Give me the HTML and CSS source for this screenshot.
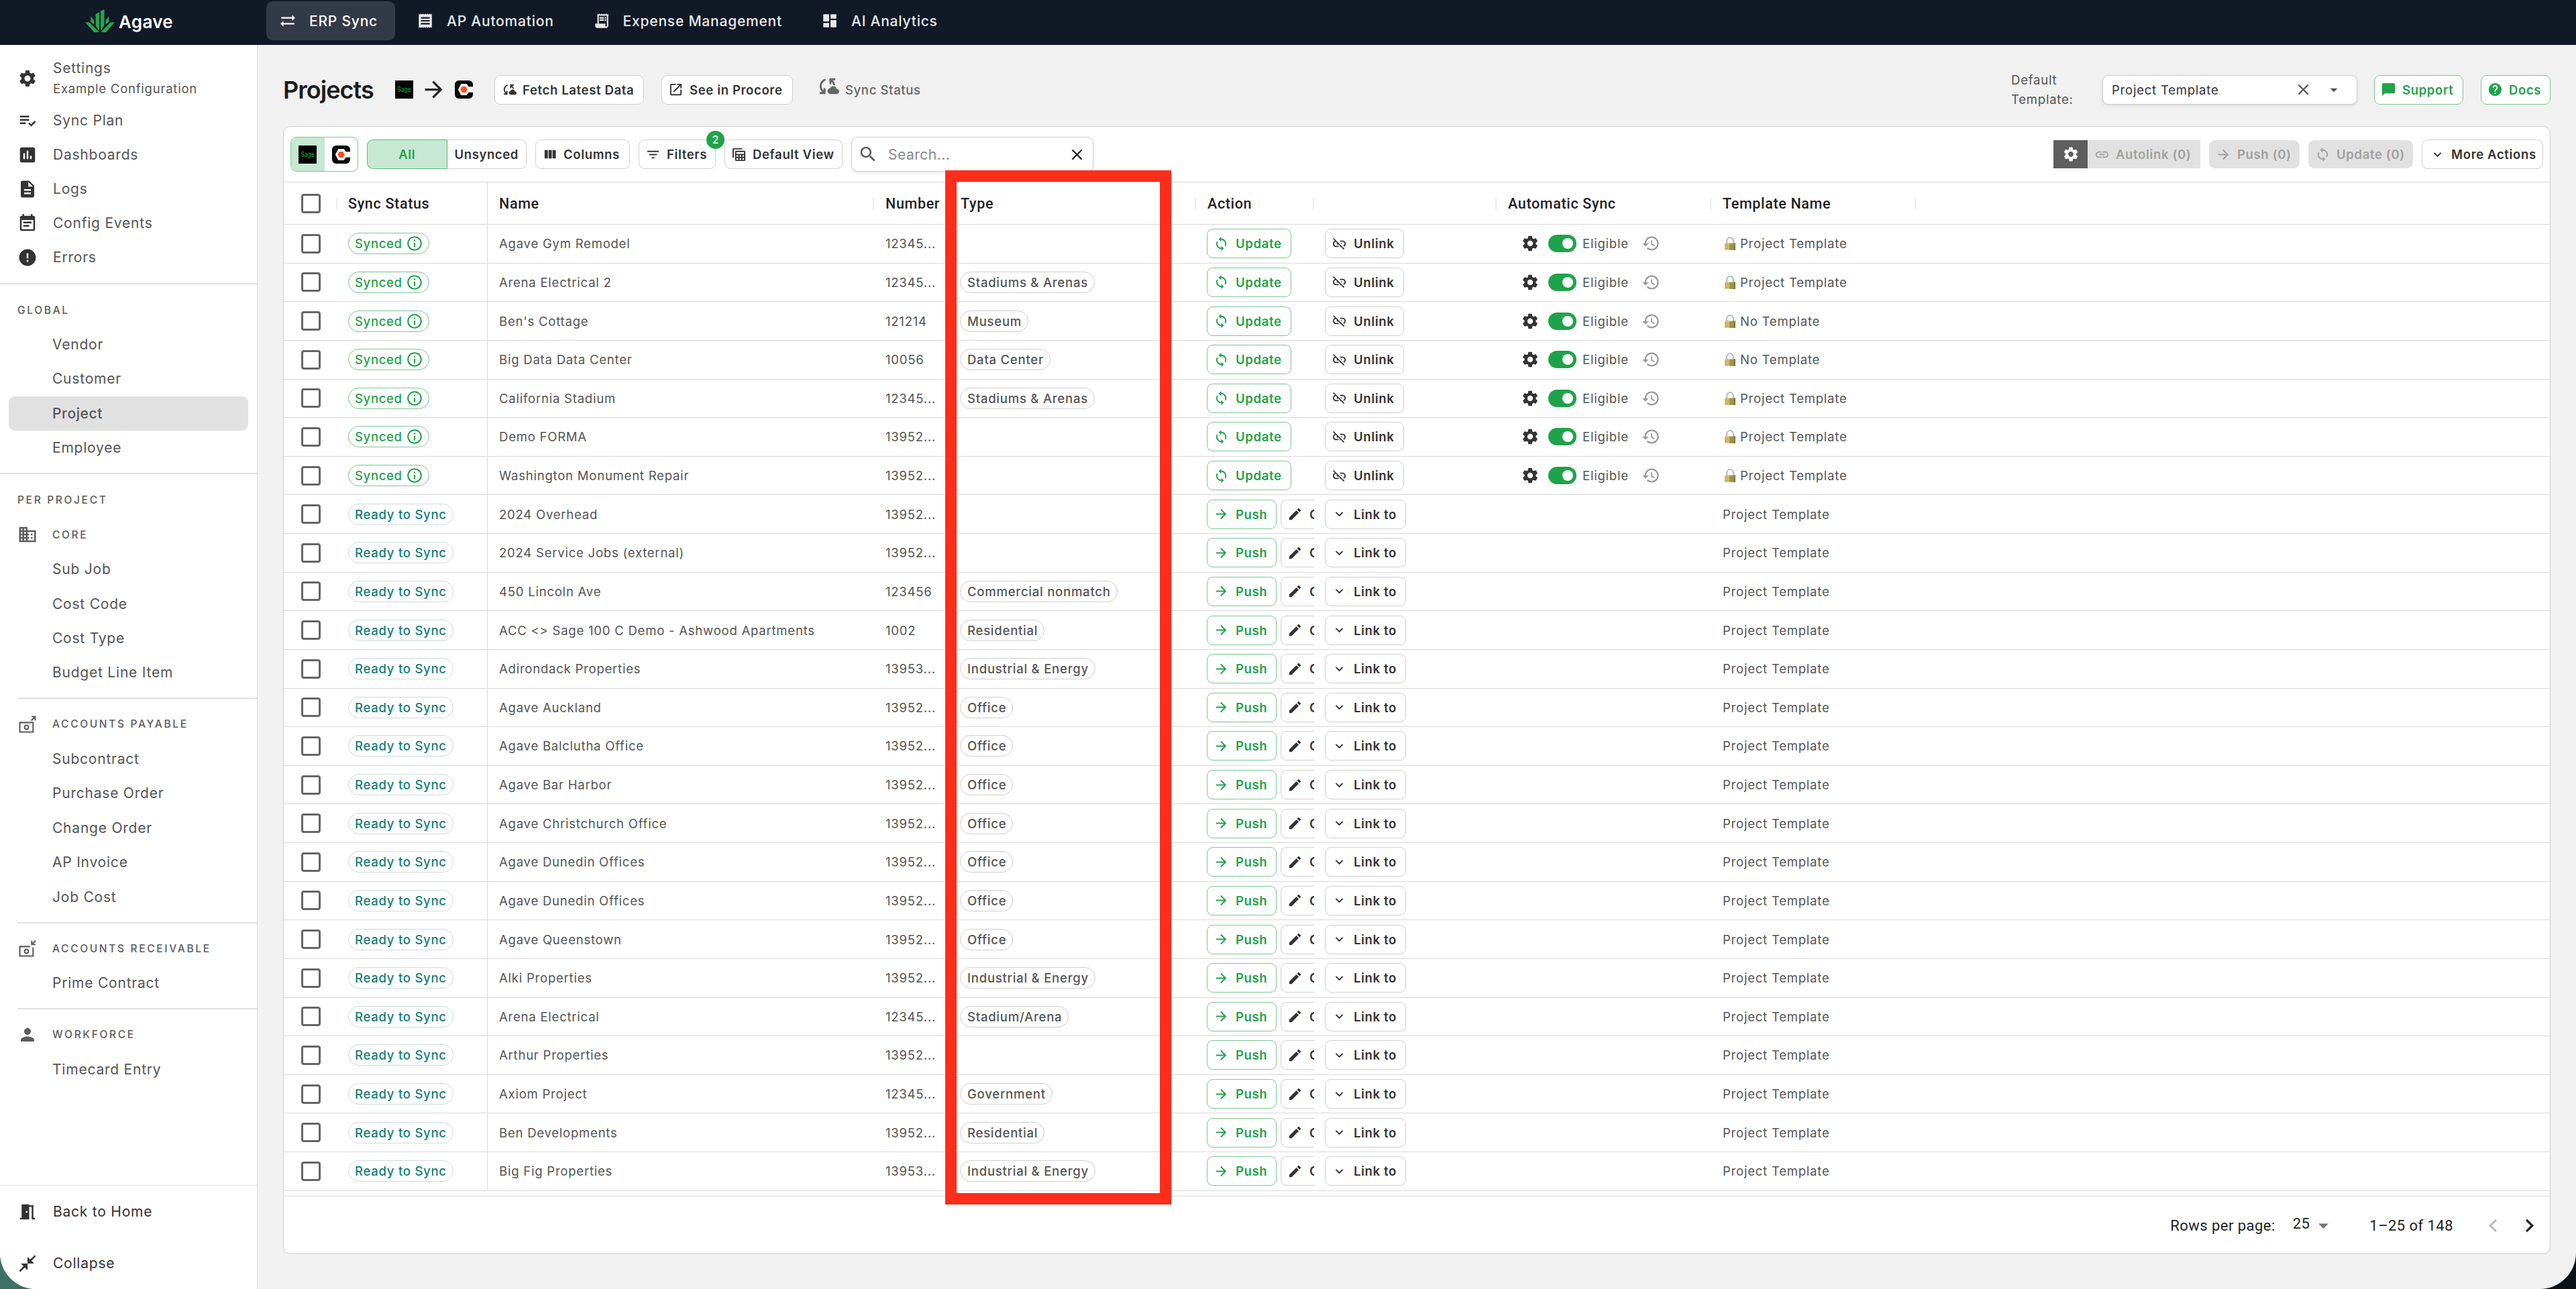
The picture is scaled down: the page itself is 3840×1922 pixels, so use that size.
FILE: index.html
```html
<!DOCTYPE html>
<html lang="en">
<head>
    <meta charset="UTF-8">
    <meta name="viewport" content="width=device-width, initial-scale=1.0">
    <title>Projects - Agave ERP Sync</title>
    <link rel="stylesheet" href="styles.css">
</head>
<body>
    <!-- icon sprite -->
    <svg class="sprite">
        <symbol id="i-swap" viewBox="0 0 24 24"><path d="m22 8-4-4v3H3v2h15v3zM2 16l4 4v-3h15v-2H6v-3z"/></symbol>
        <symbol id="i-receipt" viewBox="0 0 24 24"><path d="M18 17H6v-2h12zm0-4H6v-2h12zm0-4H6V7h12zM3 22l1.5-1.5L6 22l1.5-1.5L9 22l1.5-1.5L12 22l1.5-1.5L15 22l1.5-1.5L18 22l1.5-1.5L21 22V2l-1.5 1.5L18 2l-1.5 1.5L15 2l-1.5 1.5L12 2l-1.5 1.5L9 2 7.5 3.5 6 2 4.5 3.5 3 2z"/></symbol>
        <symbol id="i-long" viewBox="0 0 24 24"><path d="M19.5 3.5 18 2l-1.5 1.5L15 2l-1.5 1.5L12 2l-1.5 1.5L9 2 7.5 3.5 6 2v14H3v3c0 1.66 1.34 3 3 3h12c1.66 0 3-1.34 3-3V2zM19 19c0 .55-.45 1-1 1s-1-.45-1-1v-3H8V5h11zM9 7h6v2H9zM16 7h2v2h-2zM9 10h6v2H9zM16 10h2v2h-2z"/></symbol>
        <symbol id="i-dash" viewBox="0 0 24 24"><path d="M3 13h8V3H3zm0 8h8v-6H3zm10 0h8V11h-8zm0-18v6h8V3z"/></symbol>
        <symbol id="i-gear" viewBox="0 0 24 24"><path d="M19.14 12.94c.04-.3.06-.61.06-.94 0-.32-.02-.64-.07-.94l2.03-1.58c.18-.14.23-.41.12-.61l-1.92-3.32c-.12-.22-.37-.29-.59-.22l-2.39.96c-.5-.38-1.03-.7-1.62-.94l-.36-2.54c-.04-.24-.24-.41-.48-.41h-3.84c-.24 0-.43.17-.47.41l-.36 2.54c-.59.24-1.13.57-1.62.94l-2.39-.96c-.22-.08-.47 0-.59.22L2.74 8.87c-.12.21-.08.47.12.61l2.03 1.58c-.05.3-.09.63-.09.94s.02.64.07.94l-2.03 1.58c-.18.14-.23.41-.12.61l1.92 3.32c.12.22.37.29.59.22l2.39-.96c.5.38 1.03.7 1.62.94l.36 2.54c.05.24.24.41.48.41h3.84c.24 0 .44-.17.47-.41l.36-2.54c.59-.24 1.13-.56 1.62-.94l2.39.96c.22.08.47 0 .59-.22l1.92-3.32c.12-.22.07-.47-.12-.61zM12 15.6c-1.98 0-3.6-1.62-3.6-3.6s1.62-3.6 3.6-3.6 3.6 1.62 3.6 3.6-1.62 3.6-3.6 3.6"/></symbol>
        <symbol id="i-plan" viewBox="0 0 24 24"><path d="M3 10h11v2H3zm0-4h11v2H3zm0 8h7v2H3zm17.59-2.07-4.25 4.24-2.12-2.12-1.41 1.41L16.34 19 22 13.34z"/></symbol>
        <symbol id="i-chart" viewBox="0 0 24 24"><path d="M19 3H5c-1.1 0-2 .9-2 2v14c0 1.1.9 2 2 2h14c1.1 0 2-.9 2-2V5c0-1.1-.9-2-2-2M9 17H7v-7h2zm4 0h-2V7h2zm4 0h-2v-4h2z"/></symbol>
        <symbol id="i-doc" viewBox="0 0 24 24"><path d="M14 2H6c-1.1 0-1.99.9-1.99 2L4 20c0 1.1.89 2 1.99 2H18c1.1 0 2-.9 2-2V8zm2 16H8v-2h8zm0-4H8v-2h8zm-3-5V3.5L18.5 9z"/></symbol>
        <symbol id="i-event" viewBox="0 0 24 24"><path d="M17 10H7v2h10zm2-7h-1V1h-2v2H8V1H6v2H5c-1.11 0-1.99.9-1.99 2L3 19c0 1.1.89 2 2 2h14c1.1 0 2-.9 2-2V5c0-1.1-.9-2-2-2m0 16H5V8h14zm-5-5H7v2h7z"/></symbol>
        <symbol id="i-error" viewBox="0 0 24 24"><path d="M12 2C6.48 2 2 6.48 2 12s4.48 10 10 10 10-4.48 10-10S17.52 2 12 2m1 15h-2v-2h2zm0-4h-2V7h2z"/></symbol>
        <symbol id="i-building" viewBox="0 0 24 24"><path d="M12 7V3H2v18h20V7zM6 19H4v-2h2zm0-4H4v-2h2zm0-4H4V9h2zm0-4H4V5h2zm4 12H8v-2h2zm0-4H8v-2h2zm0-4H8V9h2zm0-4H8V5h2zm10 12h-8v-2h2v-2h-2v-2h2v-2h-2V9h8zm-2-8h-2v2h2zm0 4h-2v2h2z"/></symbol>
        <symbol id="i-payable" viewBox="0 0 24 24"><path d="M2 9h17.5v13H2zm1.7 1.7v9.6h14.1v-9.6z" fill-rule="evenodd"/><circle cx="10.8" cy="15.5" r="2.3" fill="none" stroke="currentColor" stroke-width="1.6"/><path d="M16.8 2H22v5.4h-1.6V4.9l-3.2 3.2-1.3-1.2 3.3-3.3h-2.4z"/></symbol>
        <symbol id="i-receivable" viewBox="0 0 24 24"><path d="M2 9h13v1.7H3.7v9.6h14.1V11h1.7v11H2z"/><circle cx="10.8" cy="15.5" r="2.3" fill="none" stroke="currentColor" stroke-width="1.6"/><path d="M21.5 8.2h-5.3V2.8h1.6v2.5L21 2.1l1.2 1.2L19 6.6h2.5z"/></symbol>
        <symbol id="i-person" viewBox="0 0 24 24"><path d="M12 12c2.21 0 4-1.79 4-4s-1.79-4-4-4-4 1.79-4 4 1.79 4 4 4m0 2c-2.67 0-8 1.34-8 4v2h16v-2c0-2.66-5.33-4-8-4"/></symbol>
        <symbol id="i-door" viewBox="0 0 24 24"><path d="M14 6v15H3v-2h2V3h9v1h5v15h2v2h-4V6zm-4 5v2h2v-2z"/></symbol>
        <symbol id="i-collapse" viewBox="0 0 24 24"><path d="M22 3.41 16.71 8.7 20 12h-8V4l3.29 3.29L20.59 2zM3.41 22l5.29-5.29L12 20v-8H4l3.29 3.29L2 20.59z"/></symbol>
        <symbol id="i-forward" viewBox="0 0 24 24"><path d="m12 4-1.41 1.41L16.17 11H4v2h12.17l-5.58 5.59L12 20l8-8z"/></symbol>
        <symbol id="i-cloud" viewBox="0 0 24 24"><path d="M21.5 14.98c-.02 0-.03 0-.05.01C21.2 13.3 19.76 12 18 12c-1.4 0-2.6.83-3.16 2.02C13.26 14.1 12 15.4 12 17c0 1.66 1.34 3 3 3l6.5-.02c1.38 0 2.5-1.12 2.5-2.5s-1.12-2.5-2.5-2.5M10 4.26v2.09C7.67 7.18 6 9.39 6 12c0 1.77.78 3.34 2 4.44V14h2v6H4v-2h2.73C5.06 16.54 4 14.4 4 12c0-3.73 2.55-6.85 6-7.74M20 6h-2.73c1.43 1.26 2.41 3.01 2.66 5h-2.02c-.23-1.36-.93-2.55-1.91-3.44V10h-2V4h6z"/></symbol>
        <symbol id="i-open" viewBox="0 0 24 24"><path d="M19 19H5V5h7V3H5c-1.11 0-2 .9-2 2v14c0 1.1.89 2 2 2h14c1.1 0 2-.9 2-2v-7h-2zM14 3v2h3.59l-9.83 9.83 1.41 1.41L19 6.41V10h2V3z"/></symbol>
        <symbol id="i-columns" viewBox="0 0 24 24"><path d="M10.2 18h5V5h-5zm-6.2 0h5V5H4zM16.4 5v13h5V5z"/></symbol>
        <symbol id="i-filter" viewBox="0 0 24 24"><path d="M10 18h4v-2h-4zM3 6v2h18V6zm3 7h12v-2H6z"/></symbol>
        <symbol id="i-views" viewBox="0 0 24 24"><path d="M17 2H4C2.9 2 2 2.9 2 4v13h2V4h13z"/><path d="M20 6H8c-1.1 0-2 .9-2 2v12c0 1.1.9 2 2 2h12c1.1 0 2-.9 2-2V8c0-1.1-.9-2-2-2M8 8h12v3H8zm0 5h3v2.5H8zm5 0h2.5v2.5H13zm4.5 0H20v2.5h-2.5zM8 17.5h3V20H8zm5 0h2.5V20H13zm4.5 0H20V20h-2.5z" fill-rule="evenodd"/></symbol>
        <symbol id="i-search" viewBox="0 0 24 24"><path d="M15.5 14h-.79l-.28-.27C15.41 12.59 16 11.11 16 9.5 16 5.91 13.09 3 9.5 3S3 5.91 3 9.5 5.91 16 9.5 16c1.61 0 3.09-.59 4.23-1.57l.27.28v.79l5 4.99L20.49 19zm-6 0C7.01 14 5 11.99 5 9.5S7.01 5 9.5 5 14 7.01 14 9.5 11.99 14 9.5 14"/></symbol>
        <symbol id="i-close" viewBox="0 0 24 24"><path d="M19 6.41 17.59 5 12 10.59 6.41 5 5 6.41 10.59 12 5 17.59 6.41 19 12 13.41 17.59 19 19 17.59 13.41 12z"/></symbol>
        <symbol id="i-drop" viewBox="0 0 24 24"><path d="m7 10 5 5 5-5z"/></symbol>
        <symbol id="i-chat" viewBox="0 0 24 24"><path d="M20 2H4c-1.1 0-2 .9-2 2v18l4-4h14c1.1 0 2-.9 2-2V4c0-1.1-.9-2-2-2"/></symbol>
        <symbol id="i-help" viewBox="0 0 24 24"><path d="M12 2C6.48 2 2 6.48 2 12s4.48 10 10 10 10-4.48 10-10S17.52 2 12 2m1 17h-2v-2h2zm2.07-7.75-.9.92C13.45 12.9 13 13.5 13 15h-2v-.5c0-1.1.45-2.1 1.17-2.83l1.24-1.26c.37-.36.59-.86.59-1.41 0-1.1-.9-2-2-2s-2 .9-2 2H8c0-2.21 1.79-4 4-4s4 1.79 4 4c0 .88-.36 1.68-.93 2.25"/></symbol>
        <symbol id="i-link" viewBox="0 0 24 24"><path d="M3.9 12c0-1.71 1.39-3.1 3.1-3.1h4V7H7c-2.76 0-5 2.24-5 5s2.24 5 5 5h4v-1.9H7c-1.71 0-3.1-1.39-3.1-3.1M8 13h8v-2H8zm9-6h-4v1.9h4c1.71 0 3.1 1.39 3.1 3.1s-1.39 3.1-3.1 3.1h-4V17h4c2.76 0 5-2.24 5-5s-2.24-5-5-5"/></symbol>
        <symbol id="i-unlink" viewBox="0 0 24 24"><path d="M17 7h-4v1.9h4c1.71 0 3.1 1.39 3.1 3.1 0 1.43-.98 2.63-2.31 2.98l1.46 1.46C20.88 15.61 22 13.95 22 12c0-2.76-2.24-5-5-5m-1 4h-2.19l2 2H16zM2 4.27l3.11 3.11C3.29 8.12 2 9.91 2 12c0 2.76 2.24 5 5 5h4v-1.9H7c-1.71 0-3.1-1.39-3.1-3.1 0-1.59 1.21-2.9 2.76-3.07L8.73 11H8v2h2.73L13 15.27V17h1.73l4.01 4L20 19.74 3.27 3z"/></symbol>
        <symbol id="i-sync" viewBox="0 0 24 24"><path d="M12 4V1L8 5l4 4V6c3.31 0 6 2.69 6 6 0 1.01-.25 1.97-.7 2.8l1.46 1.46C19.54 15.03 20 13.57 20 12c0-4.42-3.58-8-8-8m0 14c-3.31 0-6-2.69-6-6 0-1.01.25-1.97.7-2.8L5.24 7.74C4.46 8.97 4 10.43 4 12c0 4.42 3.58 8 8 8v3l4-4-4-4z"/></symbol>
        <symbol id="i-edit" viewBox="0 0 24 24"><path d="M3 17.25V21h3.75L17.81 9.94l-3.75-3.75zM20.71 7.04c.39-.39.39-1.02 0-1.41l-2.34-2.34c-.39-.39-1.02-.39-1.41 0l-1.83 1.83 3.75 3.75z"/></symbol>
        <symbol id="i-expand" viewBox="0 0 24 24"><path d="M16.59 8.59 12 13.17 7.41 8.59 6 10l6 6 6-6z"/></symbol>
        <symbol id="i-history" viewBox="0 0 24 24"><path d="M13 3c-4.97 0-9 4.03-9 9H1l3.89 3.89.07.14L9 12H6c0-3.87 3.13-7 7-7s7 3.13 7 7-3.13 7-7 7c-1.93 0-3.68-.79-4.94-2.06l-1.42 1.42C8.27 19.99 10.51 21 13 21c4.97 0 9-4.03 9-9s-4.03-9-9-9m-1 5v5l4.28 2.54.72-1.21-3.5-2.08V8z"/></symbol>
        <symbol id="i-info" viewBox="0 0 24 24"><path d="M11 7h2v2h-2zm0 4h2v6h-2zm1-9C6.48 2 2 6.48 2 12s4.48 10 10 10 10-4.48 10-10S17.52 2 12 2m0 18c-4.41 0-8-3.59-8-8s3.59-8 8-8 8 3.59 8 8-3.59 8-8 8"/></symbol>
        <symbol id="i-left" viewBox="0 0 24 24"><path d="M15.41 7.41 14 6l-6 6 6 6 1.41-1.41L10.83 12z"/></symbol>
        <symbol id="i-right" viewBox="0 0 24 24"><path d="M10 6 8.59 7.41 13.17 12l-4.58 4.59L10 18l6-6z"/></symbol>
        <symbol id="i-sage" viewBox="0 0 27 27"><path fill="#000" d="M0 0h27v27H0z"/><text x="13.5" y="17" text-anchor="middle" textLength="20" lengthAdjust="spacingAndGlyphs" font-family="Inter, sans-serif" font-size="10.5" letter-spacing="0" fill="#1fb53c">Sage</text></symbol>
        <symbol id="i-procore" viewBox="0 0 27 27"><path fill="#000" d="M6 0h15a6 6 0 0 1 6 6v3.5h-6.500L17.500 5h-8L5 13.500 9.500 22h8l3-4.500H27V21a6 6 0 0 1-6 6H6a6 6 0 0 1-6-6V6a6 6 0 0 1 6-6z"/><path fill="#fff" d="M9.5 5h8l3 4.500H27v8h-6.500l-3 4.500h-8L5 13.500z"/><path fill="#ff5020" d="M10.8 9h5.400l2.600 4.500-2.600 4.500h-5.400l-2.600-4.500z"/></symbol>
        <symbol id="i-lock" viewBox="0 0 16 20"><path d="M3.2 10V6a4.800 4.800 0 0 1 9.600 0v4" fill="none" stroke="#9fb3c6" stroke-width="1.700"/><path fill="#a79a52" d="M0 9.500h16V20H0z"/><path fill="#d2ca78" d="M0 9.500h7V20H0z"/><path fill="#8b7f3f" d="M13 9.500h3V20h-3z"/><path stroke="#8b7f3f" stroke-width=".5" d="M0 12.500h16M0 15h16M0 17.500h16"/></symbol>
    </svg>

    <div class="window">
        <header class="topbar">
            <div class="brand">
                <svg class="brand-mark" viewBox="0 0 44 34"><path fill="#2ba24c" d="M15.6 7 21.2 4v28.5l-5.6-8zM23 2.5 28.5 0v24L23 32.5zM8.3 10l5 6.500v6l-5-4zM35.4 10l-5 6.500v6l5-4zM0 19.3h6L21.2 34h-8zM44 19.3h-6L23 34h8z"/></svg>
                <span class="brand-name">Agave</span>
            </div>
            <nav class="tabs">
                <a class="tab active"><svg class="icon"><use href="#i-swap"/></svg>ERP Sync</a>
                <a class="tab"><svg class="icon"><use href="#i-receipt"/></svg>AP Automation</a>
                <a class="tab"><svg class="icon"><use href="#i-long"/></svg>Expense Management</a>
                <a class="tab"><svg class="icon"><use href="#i-dash"/></svg>AI Analytics</a>
            </nav>
        </header>

        <div class="layout">
            <aside class="sidebar">
                <div class="side-block side-first">
                    <a class="side-item settings"><svg class="icon"><use href="#i-gear"/></svg><span>Settings<small>Example Configuration</small></span></a>
                    <a class="side-item"><svg class="icon"><use href="#i-plan"/></svg>Sync Plan</a>
                    <a class="side-item"><svg class="icon"><use href="#i-chart"/></svg>Dashboards</a>
                    <a class="side-item"><svg class="icon"><use href="#i-doc"/></svg>Logs</a>
                    <a class="side-item"><svg class="icon"><use href="#i-event"/></svg>Config Events</a>
                    <a class="side-item"><svg class="icon"><use href="#i-error"/></svg>Errors</a>
                </div>
                <div class="side-block">
                    <h3 class="side-head">Global</h3>
                    <a class="side-link">Vendor</a>
                    <a class="side-link">Customer</a>
                    <a class="side-link selected">Project</a>
                    <a class="side-link">Employee</a>
                </div>
                <div class="side-block">
                    <h3 class="side-head">Per Project</h3>
                    <h4 class="side-group core"><svg class="icon"><use href="#i-building"/></svg>Core</h4>
                    <a class="side-link">Sub Job</a>
                    <a class="side-link">Cost Code</a>
                    <a class="side-link">Cost Type</a>
                    <a class="side-link">Budget Line Item</a>
                </div>
                <div class="side-block inset">
                    <h4 class="side-group"><svg class="icon"><use href="#i-payable"/></svg>Accounts Payable</h4>
                    <a class="side-link">Subcontract</a>
                    <a class="side-link">Purchase Order</a>
                    <a class="side-link">Change Order</a>
                    <a class="side-link">AP Invoice</a>
                    <a class="side-link">Job Cost</a>
                </div>
                <div class="side-block inset">
                    <h4 class="side-group"><svg class="icon"><use href="#i-receivable"/></svg>Accounts Receivable</h4>
                    <a class="side-link">Prime Contract</a>
                </div>
                <div class="side-block inset">
                    <h4 class="side-group"><svg class="icon"><use href="#i-person"/></svg>Workforce</h4>
                    <a class="side-link">Timecard Entry</a>
                </div>
                <div class="side-bottom">
                    <a class="side-item"><svg class="icon"><use href="#i-door"/></svg>Back to Home</a>
                    <a class="side-item"><svg class="icon"><use href="#i-collapse"/></svg>Collapse</a>
                </div>
            </aside>

            <main class="main">
                <div class="page-head">
                    <h1 class="page-title">Projects</h1>
                    <svg class="app-logo"><use href="#i-sage"/></svg>
                    <svg class="to-arrow"><use href="#i-forward"/></svg>
                    <svg class="app-logo"><use href="#i-procore"/></svg>
                    <button class="btn fetch"><svg class="icon"><use href="#i-cloud"/></svg>Fetch Latest Data</button>
                    <button class="btn procore"><svg class="icon"><use href="#i-open"/></svg>See in Procore</button>
                    <span class="sync-status"><svg class="icon"><use href="#i-cloud"/></svg>Sync Status</span>
                    <span class="tpl-label">Default<br>Template:</span>
                    <div class="tpl-select">
                        <span>Project Template</span>
                        <svg class="icon clear"><use href="#i-close"/></svg>
                        <svg class="icon caret"><use href="#i-drop"/></svg>
                    </div>
                    <button class="btn green support"><svg class="icon"><use href="#i-chat"/></svg>Support</button>
                    <button class="btn green docs"><svg class="icon"><use href="#i-help"/></svg>Docs</button>
                </div>

                <section class="card">
                    <div class="toolbar">
                        <div class="app-toggle">
                            <span class="on"><svg class="app-logo"><use href="#i-sage"/></svg></span>
                            <span><svg class="app-logo"><use href="#i-procore"/></svg></span>
                        </div>
                        <div class="seg">
                            <span class="on">All</span>
                            <span>Unsynced</span>
                        </div>
                        <button class="btn columns"><svg class="icon"><use href="#i-columns"/></svg>Columns</button>
                        <button class="btn filters"><svg class="icon"><use href="#i-filter"/></svg>Filters<span class="badge">2</span></button>
                        <button class="btn view"><svg class="icon"><use href="#i-views"/></svg>Default View</button>
                        <div class="search">
                            <svg class="icon"><use href="#i-search"/></svg>
                            <span>Search...</span>
                            <svg class="icon clear"><use href="#i-close"/></svg>
                        </div>
                        <div class="autolink">
                            <span class="autolink-gear"><svg class="icon"><use href="#i-gear"/></svg></span>
                            <button class="btn off flat"><svg class="icon"><use href="#i-link"/></svg>Autolink (0)</button>
                        </div>
                        <button class="btn off push-all"><svg class="icon"><use href="#i-forward"/></svg>Push (0)</button>
                        <button class="btn off update-all"><svg class="icon"><use href="#i-sync"/></svg>Update (0)</button>
                        <button class="btn more"><svg class="icon"><use href="#i-expand"/></svg>More Actions</button>
                    </div>

                    <div class="table">
                        <div class="row head">
                            <div class="cell"><span class="box"></span></div>
                            <div class="cell status">Sync Status</div>
                            <div class="cell">Name</div>
                            <div class="cell">Number</div>
                            <div class="cell">Type</div>
                            <div class="cell">Action</div>
                            <div class="cell"></div>
                            <div class="cell">Automatic Sync</div>
                            <div class="cell">Template Name</div>
                        </div>
                        <div id="rows"></div>
                        <div class="highlight"></div>
                    </div>

                    <div class="pager">
                        <span class="per-page">Rows per page:</span>
                        <span class="per-value">25</span>
                        <svg class="icon caret"><use href="#i-drop"/></svg>
                        <span class="range">1–25 of 148</span>
                        <svg class="icon prev"><use href="#i-left"/></svg>
                        <svg class="icon next"><use href="#i-right"/></svg>
                    </div>
                </section>
            </main>
        </div>
    </div>
    <script src="script.js"></script>
</body>
</html>
```
FILE: styles.css
```css
* {
    box-sizing: border-box;
}
body {
    margin: 0;
    background: linear-gradient(to right, #3c7265 50%, #0b1114 50%);
    font-family: Inter, sans-serif;
    font-size: 18.5px;
    letter-spacing: 0.78px;
    color: #555;
}
.sprite {
    display: none;
}
.icon {
    width: 23px;
    height: 23px;
    fill: currentColor;
    flex: none;
}
.window {
    display: flex;
    flex-direction: column;
    height: 1922px;
    overflow: hidden;
    border-radius: 0 0 54px 54px;
    background: #f1f1f1;
}

/* top bar */
.topbar {
    display: flex;
    height: 67px;
    background: #121926;
}
.brand {
    display: flex;
    align-items: center;
    width: 397px;
    padding: 0 0 5px 127px;
}
.brand-mark {
    width: 44px;
    height: 34px;
    margin-right: 6px;
}
.brand-name {
    font-size: 26px;
    font-weight: 600;
    letter-spacing: 0.3px;
    color: #fff;
    padding-top: 3px;
}
.tabs {
    display: flex;
    gap: 13px;
    padding-top: 2px;
}
.tab {
    display: flex;
    align-items: center;
    height: 58px;
    padding: 0 26px 0 19px;
    border-radius: 9px;
    font-size: 21px;
    font-weight: 500;
    color: #e7e9ec;
}
.tab .icon {
    width: 26px;
    height: 26px;
    margin-right: 19px;
}
.tab.active {
    width: 192px;
    padding-right: 0;
    background: #333a47;
    color: #fff;
}

/* sidebar */
.layout {
    display: flex;
    flex: 1;
    min-height: 0;
}
.sidebar {
    display: flex;
    flex-direction: column;
    width: 384px;
    background: #fff;
    border-right: 1px solid #dcdcdc;
    font-size: 21px;
}
.side-first {
    padding-top: 12px;
}
.side-block {
    padding-bottom: 12px;
    border-bottom: 2px solid #e0e0e0;
}
.side-first.side-block {
    padding-bottom: 13px;
}
.side-block:nth-child(3),
.side-block:nth-child(4),
.side-block:nth-child(5) {
    border-bottom: none;
}
.side-block.inset .side-group {
    margin-left: 26px;
    padding-left: 0;
    border-top: 2px solid #e0e0e0;
    height: 65px;
}
.side-block.inset:nth-child(6) {
    border-bottom: none;
}
.side-item {
    display: flex;
    align-items: center;
    gap: 23px;
    height: 51px;
    padding-left: 26px;
}
.side-item.settings {
    height: 75px;
    line-height: 31px;
}
.side-item small {
    display: block;
    font-size: 18.5px;
}
.side-item .icon,
.side-group .icon {
    width: 30px;
    height: 30px;
}
.side-item .icon {
    color: #333;
}
.side-head,
.side-group {
    display: flex;
    align-items: center;
    height: 64px;
    margin: 0;
    padding: 12px 0 0 26px;
    font-size: 15.5px;
    font-weight: 500;
    letter-spacing: 2.67px;
    text-transform: uppercase;
    color: #5c5c5c;
}
.side-group {
    font-weight: 450;
    gap: 22px;
}
.side-group.core {
    height: 52px;
    padding-top: 0;
}
.side-link {
    display: flex;
    align-items: center;
    height: 51.3px;
    margin: 0 13px;
    padding-left: 65px;
    border-radius: 9px;
}
.side-link.selected {
    background: #e1e1e1;
    font-weight: 500;
    letter-spacing: 0.6px;
}
.side-block.inset .side-link {
    height: 51.5px;
}
.side-bottom {
    margin-top: auto;
    border-top: 1px solid #dcdcdc;
    color: #333;
}
.side-bottom .side-item {
    height: 77px;
}

/* buttons */
.btn {
    display: flex;
    align-items: center;
    gap: 9px;
    flex: none;
    height: 44px;
    padding: 0 0 0 9px;
    border: 1px solid #cfcfcf;
    border-radius: 9px;
    background: #fff;
    font: 600 18.5px Inter, sans-serif;
    letter-spacing: 0.65px;
    white-space: nowrap;
    color: #333;
}
.btn.green {
    border-color: #7cc894;
    color: #1fa34a;
}
.btn.off {
    height: 42px;
    border: none;
    padding-left: 10px;
    background: #e1e1e1;
    color: #a0a0a0;
}
.btn.flat {
    border-radius: 0;
}

/* page heading */
.main {
    flex: 1;
    padding: 0 38px;
}
.page-head {
    display: flex;
    align-items: center;
    height: 121px;
    padding-top: 12px;
}
.page-title {
    width: 167px;
    margin: 0;
    font-size: 36px;
    font-weight: 600;
    letter-spacing: -0.96px;
    color: #1c1c1c;
}
.app-logo {
    width: 27px;
    height: 27px;
    flex: none;
}
.to-arrow {
    width: 39px;
    height: 39px;
    margin: 0 12px 0 11px;
    fill: #222;
}
.fetch {
    width: 223px;
    margin-left: 32px;
}
.procore {
    width: 196px;
    margin-left: 26px;
}
.sync-status {
    display: flex;
    align-items: center;
    gap: 9px;
    margin-left: 34px;
    font-weight: 500;
    letter-spacing: 0.64px;
    color: #666;
}
.sync-status .icon {
    width: 35px;
    height: 35px;
    margin-top: -10px;
}
.tpl-label {
    width: 136px;
    margin-left: auto;
    line-height: 29px;
}
.tpl-select {
    display: flex;
    align-items: center;
    width: 380px;
    height: 44px;
    margin-right: 25px;
    padding-left: 13px;
    border: 1px solid #cfcfcf;
    border-radius: 9px;
    background: #fff;
    box-shadow: 0 2px 4px rgba(0, 0, 0, 0.1);
    color: #333;
}
.tpl-select .icon {
    color: #555;
}
.tpl-select .clear {
    width: 27px;
    height: 27px;
    margin-left: auto;
    margin-right: 19px;
}
.tpl-select .caret {
    width: 26px;
    height: 26px;
    margin-right: 21px;
}
.support {
    width: 133px;
    margin-right: 26px;
}
.docs {
    width: 104px;
}

/* card and toolbar */
.card {
    display: flex;
    flex-direction: column;
    height: 1682px;
    border: 1px solid #cfcfcf;
    border-radius: 11px;
    background: #fff;
}
.toolbar {
    display: flex;
    align-items: center;
    gap: 13px;
    height: 83px;
    padding: 0 10px;
    border-bottom: 1px solid #d9d9d9;
}
.app-toggle {
    display: flex;
    width: 101px;
    height: 52px;
    border: 1px solid #7cc894;
    border-radius: 9px;
    overflow: hidden;
}
.app-toggle span {
    display: flex;
    align-items: center;
    justify-content: center;
    flex: 1;
}
.app-toggle .on,
.seg .on {
    background: #c7e8d2;
}
.seg {
    display: flex;
    width: 238px;
    height: 44px;
    font-weight: 600;
    letter-spacing: 0.6px;
    color: #333;
}
.seg span {
    display: flex;
    align-items: center;
    justify-content: center;
    flex: 1;
    border: 1px solid #cfcfcf;
    border-left: none;
    border-radius: 0 9px 9px 0;
}
.seg .on {
    border: 1px solid #5dbb7b;
    border-radius: 9px 0 0 9px;
    color: #1fa34a;
}
.columns {
    width: 141px;
}
.filters {
    position: relative;
    width: 115px;
}
.badge {
    position: absolute;
    top: -14px;
    right: -14px;
    width: 27px;
    height: 27px;
    border-radius: 50%;
    background: #1fa34a;
    color: #fff;
    font-size: 16px;
    font-weight: 500;
    line-height: 27px;
    letter-spacing: 0;
    text-align: center;
}
.view {
    width: 176px;
}
.search {
    display: flex;
    align-items: center;
    width: 361px;
    height: 52px;
    padding: 0 10px 0 9px;
    border: 1px solid #cfcfcf;
    border-radius: 9px;
    box-shadow: 0 2px 4px rgba(0, 0, 0, 0.1);
    font-size: 21px;
    letter-spacing: 0.5px;
    color: #888;
}
.search .icon {
    width: 30px;
    height: 30px;
    margin-right: 15px;
    color: #555;
}
.search .clear {
    width: 27px;
    height: 27px;
    margin: 0 0 0 auto;
    color: #222;
}
.autolink {
    display: flex;
    width: 219px;
    height: 42px;
    margin-left: auto;
}
.autolink-gear {
    display: flex;
    align-items: center;
    justify-content: center;
    width: 51px;
    background: #5e5e5e;
    color: #fff;
}
.autolink-gear .icon {
    width: 26px;
    height: 26px;
}
.autolink .btn {
    flex: 1;
}
.push-all {
    width: 135px;
}
.update-all {
    width: 156px;
}
.more {
    width: 181px;
    padding-left: 11px;
}

/* table */
.table {
    position: relative;
}
.row {
    display: grid;
    grid-template-columns: 80px 224px 576px 112px 368px 176px 272px 320px 305px;
    height: 57.64px;
    border-bottom: 1px solid #d9d9d9;
}
.cell {
    display: flex;
    align-items: center;
    min-width: 0;
    padding-left: 17px;
    white-space: nowrap;
}
.cell:first-child {
    padding-left: 26px;
}
.cell.status,
.cell.act {
    padding-left: 16px;
}
.row .status {
    border-right: 1px solid #dcdcdc;
}
.head {
    height: 63px;
    font: 500 21.5px Roboto, sans-serif;
    letter-spacing: 0.66px;
    color: #1f1f1f;
}
/* short resize handle at the right of each heading */
.head .cell::after {
    content: "";
    width: 2px;
    height: 17px;
    margin-left: auto;
    background: #ececec;
}
.head .status::after {
    display: none;
}
.box {
    width: 29px;
    height: 29px;
    border: 3px solid #666;
    border-radius: 4px;
}
.chip {
    display: inline-flex;
    align-items: center;
    height: 32px;
    margin-left: -1px;
    padding: 0 9px 0 10px;
    border: 1px solid #cfcfcf;
    border-radius: 16px;
    font-weight: 450;
    letter-spacing: 0.77px;
}
.status .chip {
    margin-left: 0;
}
.chip.synced {
    gap: 5px;
    padding: 0 8px 0 9px;
    border-color: #7cc894;
    font-weight: 500;
    letter-spacing: 0.65px;
    color: #1fa34a;
}
.chip.synced .icon {
    width: 26px;
    height: 26px;
}
.chip.ready {
    border-color: #cfdcda;
    font-weight: 500;
    letter-spacing: 0.75px;
    padding: 0 9px;
    color: #138077;
}
.act {
    gap: 6px;
    overflow: hidden;
}
.act .btn,
.unlink,
.link-to {
    gap: 10px;
}
.act .update {
    width: 126px;
}
.act .push {
    width: 104px;
}
.unlink,
.link-to {
    margin-left: -1px;
}
.unlink {
    width: 118px;
}
.link-to {
    width: 121px;
}
.auto .icon {
    width: 28px;
    height: 28px;
    color: #333;
}
.auto .icon:first-child {
    margin-left: 19px;
}
.auto .toggle {
    display: flex;
    justify-content: flex-end;
    align-items: center;
    width: 42px;
    height: 26px;
    margin: 0 9px 0 13px;
    padding-right: 5px;
    border-radius: 13px;
    background: #1fa34a;
}
.toggle::after {
    content: "";
    width: 16px;
    height: 16px;
    border-radius: 50%;
    background: #fff;
}
.auto .icon.history {
    margin-left: 19px;
    color: #999;
}
.lock {
    width: 16px;
    height: 20px;
    margin: 0 7px 0 3px;
}
.highlight {
    position: absolute;
    top: -18px;
    left: 986px;
    width: 337px;
    height: 1542px;
    border: 17px solid #fc2d1a;
}

/* footer */
.pager {
    display: flex;
    align-items: center;
    height: 86px;
    margin-top: auto;
    padding: 1px 11px 0 0;
    border-top: 1px solid #d9d9d9;
    font: 400 22px Roboto, sans-serif;
    letter-spacing: 0.45px;
    color: #222;
}
.per-page {
    margin-left: auto;
    margin-right: 26px;
}
.per-value {
    padding-bottom: 5px;
}
.pager .caret {
    width: 35px;
    height: 35px;
    margin: 0 51px 0 3px;
    color: #757575;
}
.pager .prev,
.pager .next {
    width: 39px;
    height: 39px;
}
.pager .prev {
    margin: 0 15px 0 40px;
    color: #bdbdbd;
}
```
FILE: script.js
```js
// [name, number, type, template] - first seven projects are already synced
const projects = [
    ['Agave Gym Remodel', '12345...', '', 'Project Template'],
    ['Arena Electrical 2', '12345...', 'Stadiums & Arenas', 'Project Template'],
    ["Ben's Cottage", '121214', 'Museum', 'No Template'],
    ['Big Data Data Center', '10056', 'Data Center', 'No Template'],
    ['California Stadium', '12345...', 'Stadiums & Arenas', 'Project Template'],
    ['Demo FORMA', '13952...', '', 'Project Template'],
    ['Washington Monument Repair', '13952...', '', 'Project Template'],
    ['2024 Overhead', '13952...', '', 'Project Template'],
    ['2024 Service Jobs (external)', '13952...', '', 'Project Template'],
    ['450 Lincoln Ave', '123456', 'Commercial nonmatch', 'Project Template'],
    ['ACC <> Sage 100 C Demo - Ashwood Apartments', '1002', 'Residential', 'Project Template'],
    ['Adirondack Properties', '13953...', 'Industrial & Energy', 'Project Template'],
    ['Agave Auckland', '13952...', 'Office', 'Project Template'],
    ['Agave Balclutha Office', '13952...', 'Office', 'Project Template'],
    ['Agave Bar Harbor', '13952...', 'Office', 'Project Template'],
    ['Agave Christchurch Office', '13952...', 'Office', 'Project Template'],
    ['Agave Dunedin Offices', '13952...', 'Office', 'Project Template'],
    ['Agave Dunedin Offices', '13952...', 'Office', 'Project Template'],
    ['Agave Queenstown', '13952...', 'Office', 'Project Template'],
    ['Alki Properties', '13952...', 'Industrial & Energy', 'Project Template'],
    ['Arena Electrical', '12345...', 'Stadium/Arena', 'Project Template'],
    ['Arthur Properties', '13952...', '', 'Project Template'],
    ['Axiom Project', '12345...', 'Government', 'Project Template'],
    ['Ben Developments', '13952...', 'Residential', 'Project Template'],
    ['Big Fig Properties', '13953...', 'Industrial & Energy', 'Project Template']
];
const syncedCount = 7;

function icon(name, cls) {
    return '<svg class="icon ' + (cls || '') + '"><use href="#i-' + name + '"/></svg>';
}

function esc(text) {
    return text.replace(/&/g, '&amp;').replace(/</g, '&lt;').replace(/>/g, '&gt;');
}

function renderRow(p, i) {
    const synced = i < syncedCount;
    const status = synced
        ? '<span class="chip synced">Synced' + icon('info') + '</span>'
        : '<span class="chip ready">Ready to Sync</span>';
    const type = p[2] ? '<span class="chip">' + esc(p[2]) + '</span>' : '';
    const action = synced
        ? '<button class="btn green update">' + icon('sync') + 'Update</button>'
        : '<button class="btn green push">' + icon('forward') + 'Push</button><button class="btn">' + icon('edit') + 'Create</button>';
    const link = synced
        ? '<button class="btn unlink">' + icon('unlink') + 'Unlink</button>'
        : '<button class="btn link-to">' + icon('expand') + 'Link to</button>';
    const auto = synced
        ? icon('gear') + '<span class="toggle"></span>Eligible' + icon('history', 'history')
        : '';
    const lock = synced ? '<svg class="lock"><use href="#i-lock"/></svg>' : '';

    return '<div class="row">' +
        '<div class="cell"><span class="box"></span></div>' +
        '<div class="cell status">' + status + '</div>' +
        '<div class="cell">' + esc(p[0]) + '</div>' +
        '<div class="cell">' + p[1] + '</div>' +
        '<div class="cell">' + type + '</div>' +
        '<div class="cell act">' + action + '</div>' +
        '<div class="cell">' + link + '</div>' +
        '<div class="cell auto">' + auto + '</div>' +
        '<div class="cell">' + lock + p[3] + '</div>' +
        '</div>';
}

document.getElementById('rows').innerHTML = projects.map(renderRow).join('');
```
